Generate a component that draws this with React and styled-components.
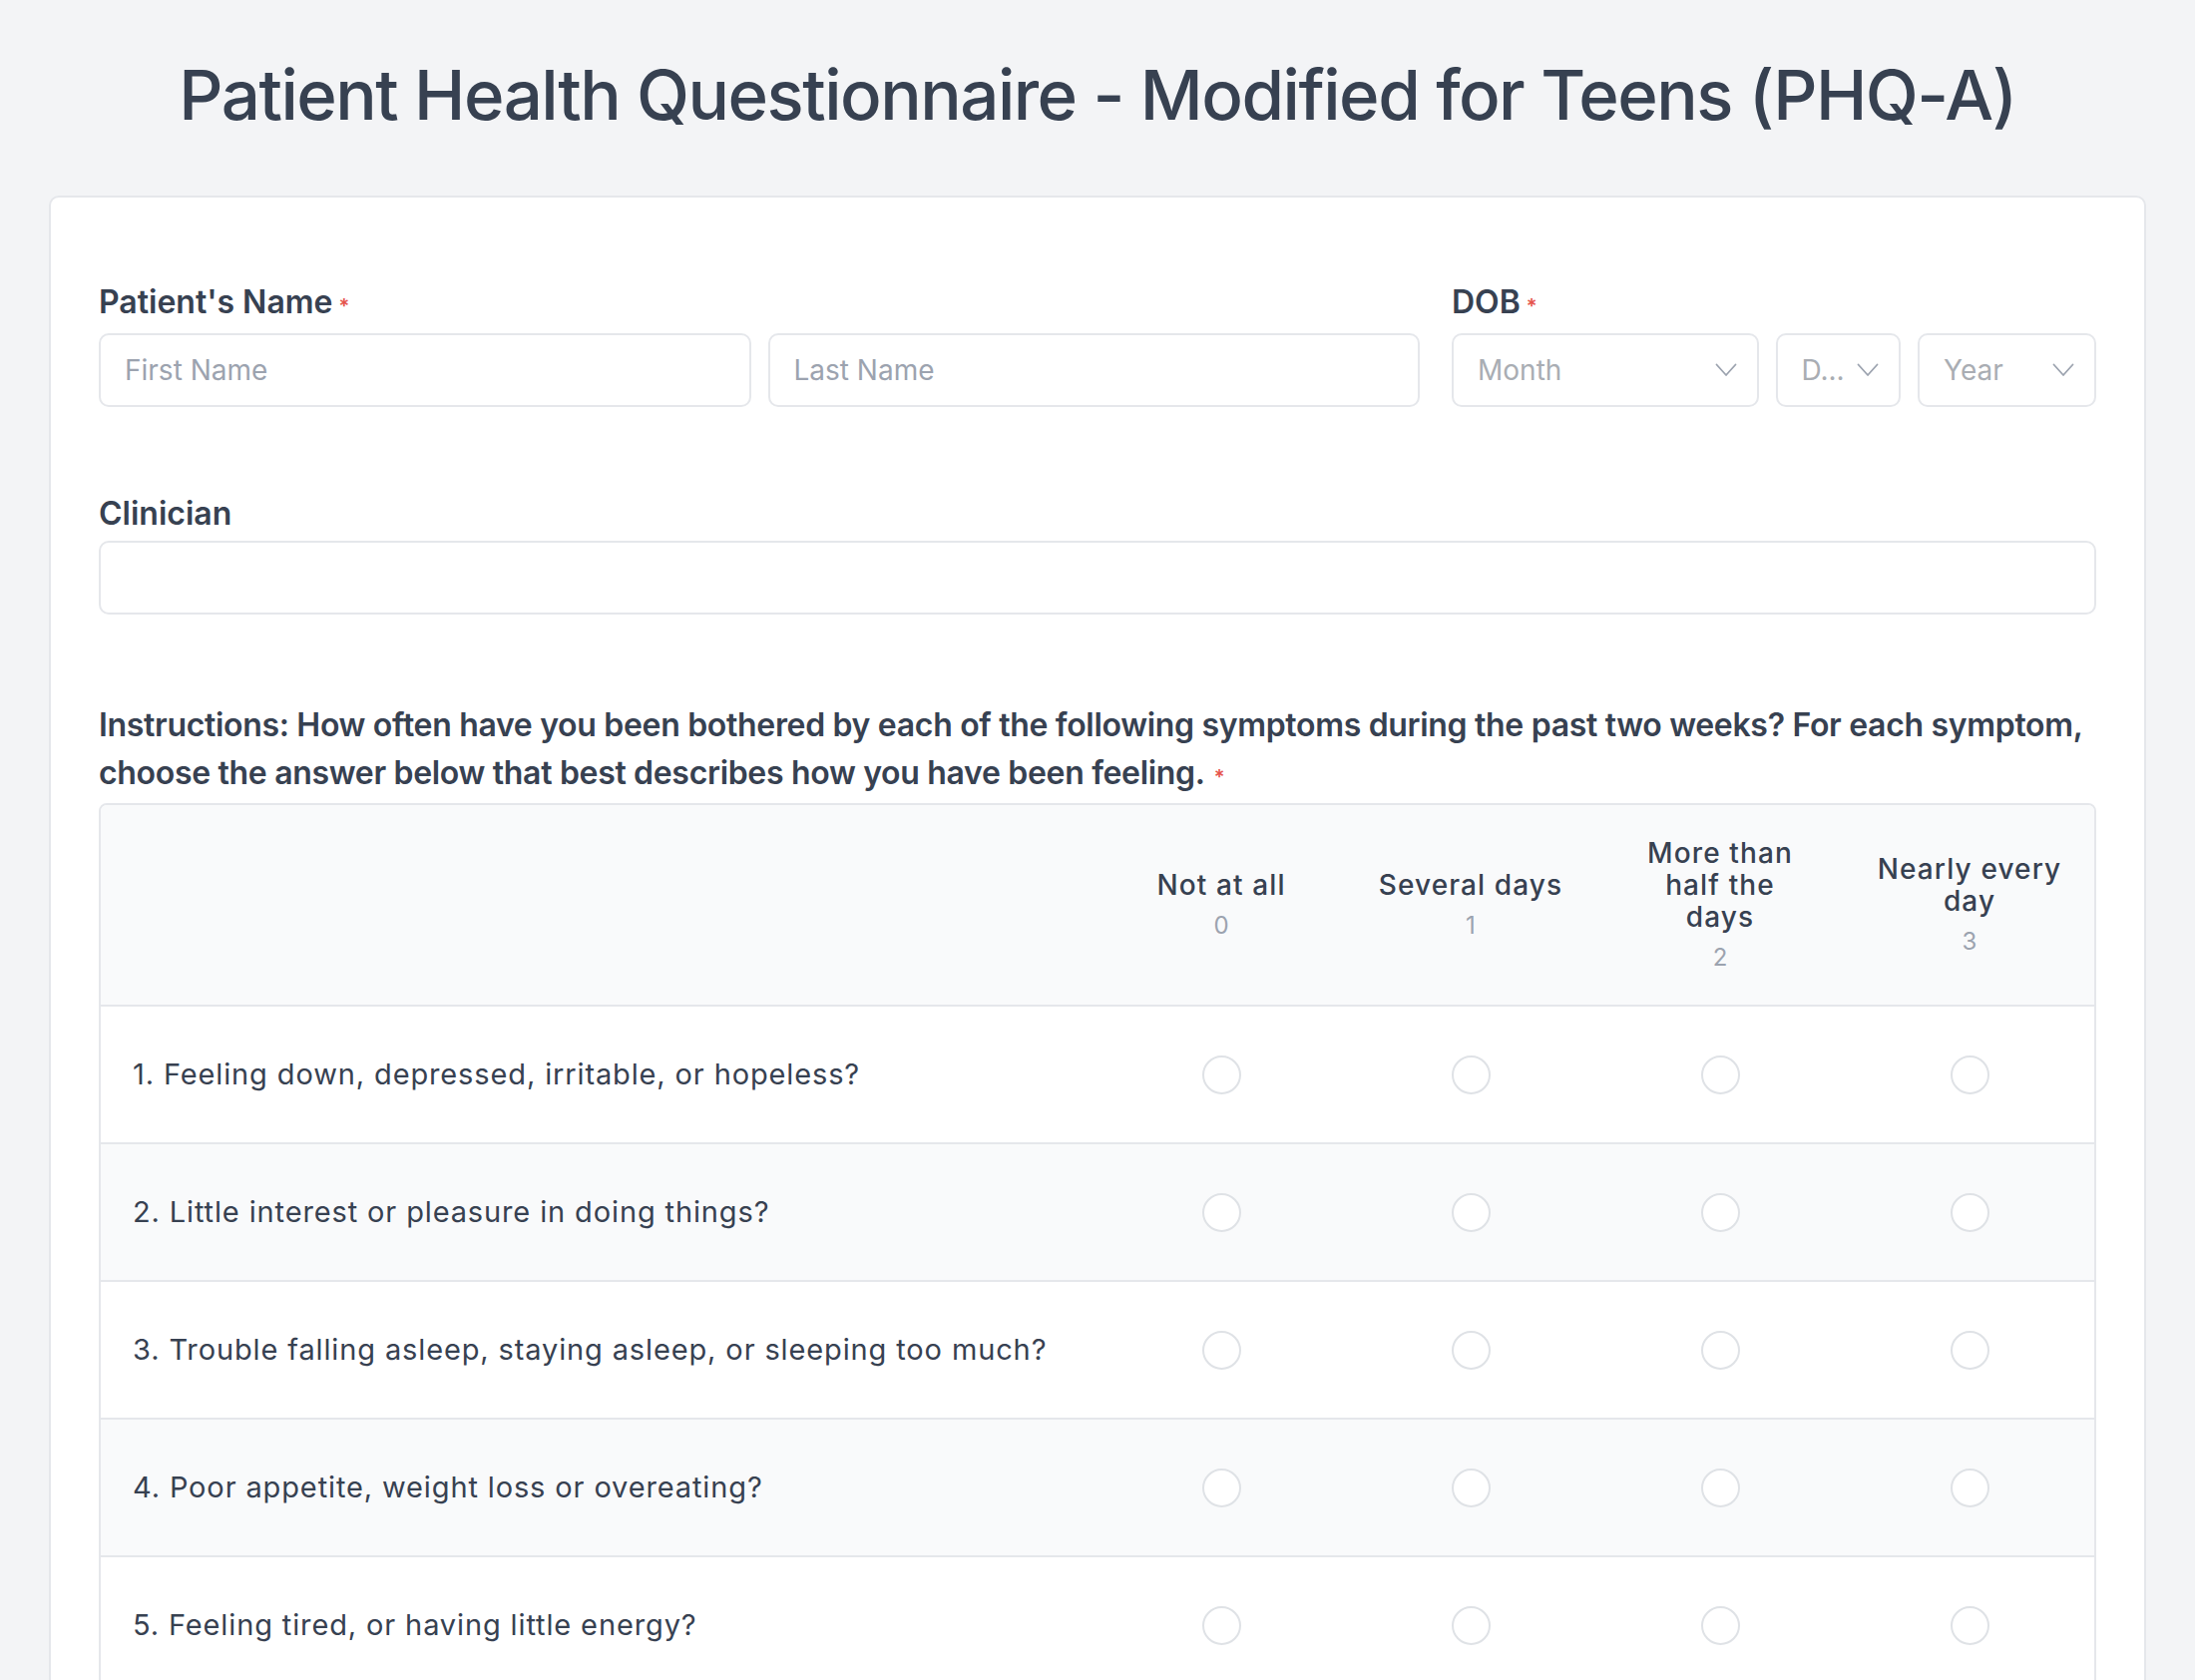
import React from "react";
import styled, { createGlobalStyle } from "styled-components";

const GlobalStyle = createGlobalStyle`
  * { box-sizing: border-box; }
  body {
    margin: 0;
    background: #f3f4f6;
    font-family: Inter, "Noto Sans", sans-serif;
    color: #374151;
  }
`;

const Page = styled.div`
  padding: 0 49px;
`;

const Header = styled.header`
  padding: 53px 0 59px;
  text-align: center;
`;

const Title = styled.h1`
  margin: 0;
  font-size: 69px;
  line-height: 84px;
  font-weight: 500;
  letter-spacing: -0.022em;
  color: #374151;
`;

const Card = styled.main`
  background: #fff;
  border: 2px solid #e5e7eb;
  border-radius: 10px;
  padding: 48px 48px 96px;
`;

const Section = styled.section`
  display: grid;
  grid-template-columns: ${(p) => p.$cols || "1fr"};
  gap: 32px;
  padding: 37px 0 ${(p) => p.$after || "50px"};
`;

const Field = styled.div`
  grid-column: span ${(p) => p.$span || 1};
  min-width: 0;
`;

const Label = styled.div`
  font-size: 32px;
  line-height: 40px;
  font-weight: 600;
  color: #374151;
  margin-bottom: 7px;
`;

const Required = styled.span`
  color: #e5534b;
  font-size: 20px;
  margin-left: ${(p) => p.$gap || "6px"};
`;

const Controls = styled.div`
  display: grid;
  grid-template-columns: ${(p) => p.$cols || "1fr"};
  gap: 17px;
`;

const TextInput = styled.input`
  width: 100%;
  height: 74px;
  border: 2px solid #e5e7eb;
  border-radius: 10px;
  padding: 0 24px;
  font-family: Inter, "Noto Sans", sans-serif;
  font-size: 28px;
  color: #374151;
  background: #fff;
  outline: none;
  &::placeholder {
    color: #9ca3af;
  }
`;

const SelectBox = styled.div`
  height: 74px;
  border: 2px solid #e5e7eb;
  border-radius: 10px;
  padding: 0 20px 0 24px;
  display: flex;
  align-items: center;
  gap: 12px;
  background: #fff;
  min-width: 0;
`;

const SelectText = styled.span`
  flex: 1;
  min-width: 0;
  font-size: 28px;
  color: #a9adb3;
  white-space: nowrap;
`;

const Chevron = styled.svg`
  flex: none;
  width: 22px;
  height: 14px;
`;

const Instructions = styled.div`
  font-size: 32px;
  line-height: 48px;
  font-weight: 600;
  letter-spacing: -0.01em;
  color: #374151;
  margin-bottom: 2px;
`;

const Table = styled.div`
  border: 2px solid #e5e7eb;
  border-radius: 8px;
  overflow: hidden;
`;

const Grid = styled.div`
  display: grid;
  grid-template-columns: 1fr repeat(4, 250px);
  align-items: center;
  background: ${(p) => (p.$shaded ? "#f9fafb" : "#fff")};
  border-top: ${(p) => (p.$first ? "none" : "2px solid #e5e7eb")};
  min-height: ${(p) => (p.$head ? "200px" : "138px")};
`;

const HeadCell = styled.div`
  padding: 24px 12px;
  text-align: center;
`;

const HeadLabel = styled.div`
  font-size: 28px;
  line-height: 32px;
  font-weight: 500;
  letter-spacing: 0.04em;
  color: #374151;
`;

const HeadValue = styled.div`
  margin-top: 9px;
  font-size: 24px;
  line-height: 32px;
  color: #9ca3af;
`;

const Question = styled.div`
  padding: 0 32px;
  font-size: 29px;
  line-height: 40px;
  letter-spacing: 0.03em;
  color: #374151;
`;

const RadioCell = styled.label`
  display: flex;
  justify-content: center;
`;

const Radio = styled.span`
  width: 39px;
  height: 39px;
  border-radius: 50%;
  border: 2px solid #dfe2e6;
  background: #fff;
`;

const options = [
  { label: ["Not at all"], value: 0 },
  { label: ["Several days"], value: 1 },
  { label: ["More than", "half the", "days"], value: 2 },
  { label: ["Nearly every", "day"], value: 3 },
];

const questions = [
  "Feeling down, depressed, irritable, or hopeless?",
  "Little interest or pleasure in doing things?",
  "Trouble falling asleep, staying asleep, or sleeping too much?",
  "Poor appetite, weight loss or overeating?",
  "Feeling tired, or having little energy?",
  "Feeling bad about yourself – or feeling that you are a failure, or that you have let yourself or your family down?",
  "Trouble concentrating on things like school work, reading, or watching TV?",
  "Moving or speaking so slowly that other people could have noticed? Or the opposite – being so fidgety or restless that you were moving around a lot more than usual?",
  "Thoughts that you would be better off dead, or of hurting yourself in some way?",
];

const Select = ({ text }) => (
  <SelectBox>
    <SelectText>{text}</SelectText>
    <Chevron viewBox="0 0 22 14" fill="none">
      <polyline points="1.5,1.5 11,12 20.5,1.5" stroke="#9ca3af" strokeWidth="1.8" strokeLinecap="round" strokeLinejoin="round" />
    </Chevron>
  </SelectBox>
);

const App = () => {
  return (
    <Page>
      <GlobalStyle />
      <Header>
        <Title>Patient Health Questionnaire - Modified for Teens (PHQ-A)</Title>
      </Header>
      <Card>
        <Section $cols="repeat(3, 1fr)">
          <Field $span={2}>
            <Label>Patient's Name<Required>*</Required></Label>
            <Controls $cols="1fr 1fr">
              <TextInput placeholder="First Name" />
              <TextInput placeholder="Last Name" />
            </Controls>
          </Field>
          <Field>
            <Label>DOB<Required>*</Required></Label>
            <Controls $cols="306fr 125fr 178fr">
              <Select text="Month" />
              <Select text="D..." />
              <Select text="Year" />
            </Controls>
          </Field>
        </Section>

        <Section $after="87px">
          <Field>
            <Label>Clinician</Label>
            <TextInput />
          </Field>
        </Section>

        <Field>
          <Instructions>
            Instructions: How often have you been bothered by each of the following symptoms during the past two weeks? For each symptom, choose the answer below that best describes how you have been feeling.<Required $gap="9px">*</Required>
          </Instructions>
          <Table>
            <Grid $head $shaded $first>
              <div />
              {options.map((o) => (
                <HeadCell key={o.value}>
                  <HeadLabel>
                    {o.label.map((line, i) => (
                      <div key={i}>{line}</div>
                    ))}
                  </HeadLabel>
                  <HeadValue>{o.value}</HeadValue>
                </HeadCell>
              ))}
            </Grid>
            {questions.map((q, i) => (
              <Grid key={i} $shaded={i % 2 === 1}>
                <Question>{`${i + 1}. ${q}`}</Question>
                {options.map((o) => (
                  <RadioCell key={o.value}>
                    <Radio />
                  </RadioCell>
                ))}
              </Grid>
            ))}
          </Table>
        </Field>
      </Card>
    </Page>
  );
};

export default App;
